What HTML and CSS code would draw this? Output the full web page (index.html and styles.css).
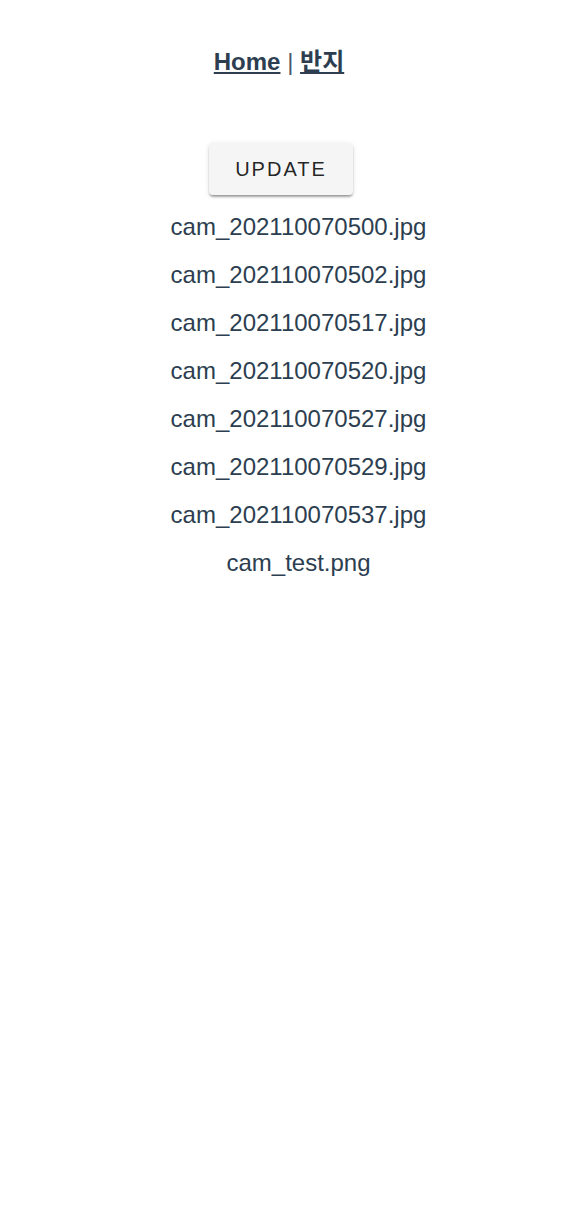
FILE: index.html
```html
<!DOCTYPE html>
<html>
<head>
<meta charset="utf-8">
<link rel="stylesheet" href="styles.css">
</head>
<body>
<div class="app">
  <nav class="nav">
    <a class="nav-link" href="#">Home</a> <span class="sep">|</span> <a class="nav-link" href="#">반지</a>
  </nav>
  <div class="main">
    <button class="btn">UPDATE</button>
    <ul class="files">
      <li>cam_202110070500.jpg</li>
      <li>cam_202110070502.jpg</li>
      <li>cam_202110070517.jpg</li>
      <li>cam_202110070520.jpg</li>
      <li>cam_202110070527.jpg</li>
      <li>cam_202110070529.jpg</li>
      <li>cam_202110070537.jpg</li>
      <li>cam_test.png</li>
    </ul>
  </div>
</div>
</body>
</html>
```
FILE: styles.css
```css
html, body {
  margin: 0;
  padding: 0;
  background: #ffffff;
}
.app {
  font-family: "Liberation Sans", Arial, "Noto Sans CJK KR", sans-serif;
  color: #2c3e50;
  text-align: center;
  font-size: 24px;
}
.nav {
  padding: 42px 30px 30px 26px;
}
.nav-link {
  font-weight: bold;
  color: #2c3e50;
  text-decoration: underline;
}
.sep {
  color: #4a5a6a;
}
.main {
  display: flex;
  flex-direction: column;
  align-items: center;
  padding-top: 36px;
}
.btn {
  height: 52px;
  padding: 0 26px;
  border: none;
  border-radius: 4px;
  background: #f5f5f5;
  color: rgba(0,0,0,0.87);
  font-family: "Liberation Sans", Arial, sans-serif;
  font-size: 20px;
  font-weight: 400;
  letter-spacing: 2px;
  box-shadow: 0 3px 3px -2px rgba(0,0,0,.3), 0 2px 2px 0 rgba(0,0,0,.16), 0 1px 5px 0 rgba(0,0,0,.12);
}
.files {
  list-style: none;
  margin: 8px 0 0;
  padding: 0 0 0 35px;
}
.files li {
  line-height: 48px;
}
```
